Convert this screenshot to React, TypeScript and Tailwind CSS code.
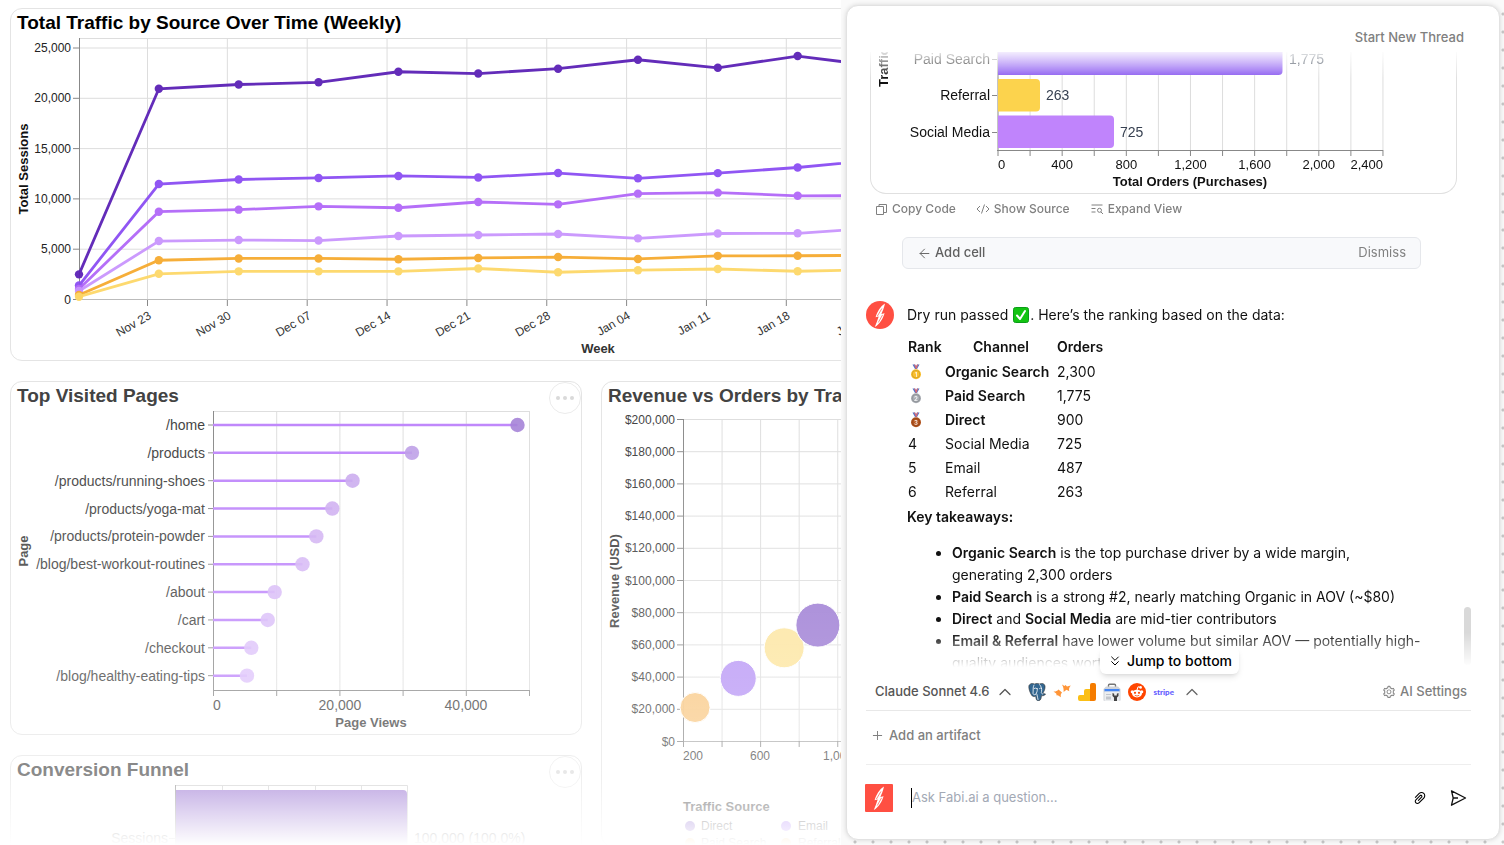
import React from 'react'
import { AiOutlinePaperClip, AiOutlinePlus, AiOutlineSetting } from 'react-icons/ai'
import { ArrowLeft, ChevronsDown, ChevronUp } from 'lucide-react'

const traffic = [
    { name: 'Direct', color: '#5b21b6', values: [2500, 20950, 21370, 21590, 22640, 22460, 22940, 23830, 23030, 24200, 23200] },
    { name: 'Organic Search', color: '#8b4df3', values: [1390, 11480, 11930, 12080, 12280, 12130, 12570, 12050, 12560, 13120, 13870] },
    { name: 'Paid Search', color: '#b268f8', values: [1050, 8730, 8930, 9260, 9120, 9690, 9460, 10520, 10620, 10310, 10320] },
    { name: 'Social Media', color: '#c995fd', values: [850, 5810, 5910, 5860, 6310, 6410, 6510, 6080, 6560, 6580, 7110] },
    { name: 'Email', color: '#f6aa2f', values: [450, 3900, 4080, 4080, 4000, 4130, 4220, 4030, 4340, 4350, 4390] },
    { name: 'Referral', color: '#fdd868', values: [280, 2555, 2800, 2800, 2800, 3080, 2710, 2910, 3030, 2810, 2970] },
]

const weeks = ['Nov 23', 'Nov 30', 'Dec 07', 'Dec 14', 'Dec 21', 'Dec 28', 'Jan 04', 'Jan 11', 'Jan 18', 'Jan 25']

const pages = [
    { path: '/home', views: 48100, color: '#a27ed6' },
    { path: '/products', views: 31400, color: '#ba9ae5' },
    { path: '/products/running-shoes', views: 22000, color: '#c6a5ed' },
    { path: '/products/yoga-mat', views: 18800, color: '#cba9f0' },
    { path: '/products/protein-powder', views: 16270, color: '#cfadf2' },
    { path: '/blog/best-workout-routines', views: 14080, color: '#d1b0f4' },
    { path: '/about', views: 9680, color: '#d5b5f6' },
    { path: '/cart', views: 8580, color: '#d6b7f8' },
    { path: '/checkout', views: 5980, color: '#d9bbfa' },
    { path: '/blog/healthy-eating-tips', views: 5300, color: '#dabdfb' },
]

const bubbles = [
    { orders: 260, revenue: 21100, r: 15, color: '#f9c47a' },
    { orders: 484, revenue: 39200, r: 18, color: '#b28df4' },
    { orders: 722, revenue: 58200, r: 20, color: '#fde396' },
    { orders: 897, revenue: 72300, r: 22, color: '#9470d0' },
]

const ranking = [
    { rank: 1, channel: 'Organic Search', orders: '2,300' },
    { rank: 2, channel: 'Paid Search', orders: '1,775' },
    { rank: 3, channel: 'Direct', orders: '900' },
    { rank: 4, channel: 'Social Media', orders: '725' },
    { rank: 5, channel: 'Email', orders: '487' },
    { rank: 6, channel: 'Referral', orders: '263' },
]

const medals = ['#fbc02d', '#a9adb3', '#b3541e']

const format = (n: number) => n.toLocaleString('en-US')

type CardProps = {
    title: string
    dark?: boolean
    menu?: boolean
    className?: string
    children: React.ReactNode
}

const Card = ({ title, dark, menu, className = '', children }: CardProps) => (
    <section className={`relative overflow-hidden rounded-xl border border-[#e4e4e4] bg-white ${className}`}>
        <h2 className={`px-[6px] pt-1 text-[19px] leading-5 font-bold whitespace-nowrap ${dark ? 'text-black' : 'text-[#404040]'}`}>{title}</h2>
        {menu && (
            <button type="button" aria-label="Cell menu" className="absolute top-0 right-0 flex size-8 items-center justify-center gap-[3px] rounded-full border border-[#ebebeb] bg-white">
                <span className="size-1 rounded-full bg-[#d9d9d9]" />
                <span className="size-1 rounded-full bg-[#d9d9d9]" />
                <span className="size-1 rounded-full bg-[#d9d9d9]" />
            </button>
        )}
        {children}
    </section>
)

const TrafficChart = () => {
    const x = (i: number) => 68 + i * 79.85
    const y = (v: number) => 266.5 - v * 0.01006
    return (
        <svg width="1161" height="327" role="img" aria-label="Weekly sessions by source">
            <path d="M68 5.5H1106" stroke="#ddd" />
            {[0, 5000, 10000, 15000, 20000, 25000].map((v) => (
                <g key={v}>
                    <path d={`M68 ${y(v)}H1106`} stroke={v ? '#ddd' : '#bbb'} />
                    <path d={`M62 ${y(v)}H68`} stroke="#888" />
                    <text x="60" y={y(v)} dy="4" textAnchor="end" fontSize="12" fill="#222">{format(v)}</text>
                </g>
            ))}
            {weeks.map((w, i) => (
                <g key={w}>
                    <path d={`M${x(i) + 68.5} 5V266`} stroke="#ddd" />
                    <path d={`M${x(i) + 68.5} 267V273`} stroke="#888" />
                    <text transform={`translate(${x(i) + 73} 285) rotate(-30)`} textAnchor="end" fontSize="12" fill="#333">{w}</text>
                </g>
            ))}
            <path d="M68.5 5V267" stroke="#888" />
            {traffic.map((s) => (
                <g key={s.name} opacity=".95">
                    <polyline points={s.values.map((v, i) => `${x(i)},${y(v)}`).join(' ')} fill="none" stroke={s.color} strokeWidth="2.8" />
                    {s.values.map((v, i) => <circle key={i} cx={x(i)} cy={y(v)} r="4.2" fill={s.color} />)}
                </g>
            ))}
            <text transform="translate(17 136) rotate(-90)" textAnchor="middle" fontSize="13" fontWeight="bold" fill="#111">Total Sessions</text>
            <text x="587" y="320" textAnchor="middle" fontSize="13" fontWeight="bold" fill="#333">Week</text>
        </svg>
    )
}

const PagesChart = () => {
    const x = (v: number) => 202.5 + v * 0.00632
    return (
        <svg width="570" height="329" role="img" aria-label="Page views by page">
            <path d="M202 5.5H519" stroke="#ddd" />
            {[0, 10000, 20000, 30000, 40000, 50000].map((v) => (
                <g key={v}>
                    <path d={`M${x(v)} 5V284`} stroke={v ? '#ddd' : '#888'} />
                    <path d={`M${x(v)} 284V290`} stroke="#888" />
                </g>
            ))}
            <path d="M202 284.5H519" stroke="#888" />
            {pages.map((p, i) => {
                const y = 19 + i * 27.85
                return (
                    <g key={p.path}>
                        <path d={`M197 ${y}H202`} stroke="#888" />
                        <text x="194" y={y} dy="5" textAnchor="end" fontSize="14" fill="#3c3c3c">{p.path}</text>
                        <path d={`M202 ${y}H${x(p.views)}`} stroke="#bd83fb" strokeWidth="2.5" />
                        <circle cx={x(p.views)} cy={y} r="7.2" fill={p.color} fillOpacity=".9" />
                    </g>
                )
            })}
            <g fontSize="14" fill="#3c3c3c">
                <text x="202" y="304">0</text>
                <text x="329" y="304" textAnchor="middle">20,000</text>
                <text x="455" y="304" textAnchor="middle">40,000</text>
            </g>
            <g fontSize="13" fontWeight="bold" fill="#3c3c3c" textAnchor="middle">
                <text x="360" y="321">Page Views</text>
                <text transform="translate(17 145) rotate(-90)">Page</text>
            </g>
        </svg>
    )
}

const RevenueChart = () => {
    const x = (v: number) => 81.5 + (v - 200) * 0.1928
    const y = (v: number) => 335.5 - v * 0.00161
    const dollars = [0, 20, 40, 60, 80, 100, 120, 140, 160, 180, 200]
    return (
        <svg width="570" height="440" role="img" aria-label="Revenue and orders by traffic source">
            {dollars.map((v) => (
                <g key={v}>
                    <path d={`M81 ${y(v * 1000)}H550`} stroke={v ? '#ddd' : '#aaa'} />
                    <path d={`M75 ${y(v * 1000)}H81`} stroke="#888" />
                    <text x="73" y={y(v * 1000)} dy="4" textAnchor="end" fontSize="12" fill="#3c3c3c">${format(v * 1000)}</text>
                </g>
            ))}
            {[200, 400, 600, 800, 1000, 1200, 1400].map((v) => (
                <g key={v}>
                    <path d={`M${x(v)} 13V335`} stroke={v === 200 ? '#888' : '#ddd'} />
                    <path d={`M${x(v)} 335V341`} stroke="#888" />
                </g>
            ))}
            {bubbles.map((b) => (
                <circle key={b.orders} cx={x(b.orders)} cy={y(b.revenue)} r={b.r} fill={b.color} fillOpacity=".95" stroke="#fff" />
            ))}
            <g fontSize="12" fill="#3c3c3c">
                <text x="81" y="354">200</text>
                <text x="158" y="354" textAnchor="middle">600</text>
                <text x="236" y="354" textAnchor="middle">1,000</text>
            </g>
            <text transform="translate(17 175) rotate(-90)" textAnchor="middle" fontSize="13" fontWeight="bold" fill="#3c3c3c">Revenue (USD)</text>
            <text x="81" y="405" fontSize="13" fontWeight="bold" fill="#3c3c3c">Traffic Source</text>
            <g fontSize="12" fill="#3c3c3c">
                <circle cx="88" cy="420" r="5" fill="#7e57c9" />
                <text x="99" y="424">Direct</text>
                <circle cx="184" cy="420" r="5" fill="#a06bf7" />
                <text x="196" y="424">Email</text>
                <circle cx="88" cy="437" r="5" fill="#f6aa2f" />
                <text x="99" y="441">Paid Search</text>
                <circle cx="184" cy="437" r="5" fill="#f6aa2f" />
                <text x="196" y="441">Referral</text>
            </g>
        </svg>
    )
}

const FunnelChart = () => (
    <svg width="570" height="200" role="img" aria-label="Conversion funnel">
        <path d="M164 5.5H396.500V200M211.500 5V10M257.500 5V10M304.500 5V10M350.500 5V10" fill="none" stroke="#ccc" />
        <path d="M164 10H392a4 4 0 0 1 4 4V200H164z" fill="#936ccf" />
        <path d="M164.500 5V200M158 58.500H164" stroke="#888" />
        <g fontSize="14" fill="#3c3c3c">
            <text x="157" y="63" textAnchor="end">Sessions</text>
            <text x="403" y="63">100,000 (100.0%)</text>
        </g>
    </svg>
)

const OrdersChart = () => {
    const x = (v: number) => 127 + v * 0.1604
    const ticks = Array.from({ length: 13 }, (_, i) => i * 200)
    return (
        <svg width="585" height="141" role="img" aria-label="Total orders by traffic channel">
            <defs>
                <linearGradient id="paid" x2="0" y2="1">
                    <stop stopColor="#a877f8" />
                    <stop offset="1" stopColor="#8b5cf0" />
                </linearGradient>
            </defs>
            {ticks.map((v) => <path key={v} d={`M${x(v)} 0V98`} stroke={v ? '#ddd' : '#888'} />)}
            <path d="M126 98.500H512" stroke="#888" />
            {ticks.map((v) => <path key={v} d={`M${x(v)} 98V104`} stroke="#888" />)}
            <path d="M127 -8H411.500V19a4 4 0 0 1 -4 4H127z" fill="url(#paid)" />
            <path d="M127 27H165a4 4 0 0 1 4 4V55.500a4 4 0 0 1 -4 4H127z" fill="#fcd34d" />
            <path d="M127 63.500H239a4 4 0 0 1 4 4V92a4 4 0 0 1 -4 4H127z" fill="#c084fc" />
            <path d="M121 7.500H126M121 43.500H126M121 80.500H126" stroke="#888" />
            <g fontSize="14" fill="#111" textAnchor="end">
                <text x="119" y="12">Paid Search</text>
                <text x="119" y="48">Referral</text>
                <text x="119" y="85">Social Media</text>
            </g>
            <g fontSize="14" fill="#374151">
                <text x="418" y="12">1,775</text>
                <text x="175" y="48">263</text>
                <text x="249" y="85">725</text>
            </g>
            <g fontSize="13" fill="#111" textAnchor="middle">
                <text x="127" y="117" textAnchor="start">0</text>
                {[400, 800, 1200, 1600, 2000].map((v) => <text key={v} x={x(v)} y="117">{format(v)}</text>)}
                <text x="512" y="117" textAnchor="end">2,400</text>
            </g>
            <text x="319" y="134" textAnchor="middle" fontSize="13" fontWeight="bold" fill="#111">Total Orders (Purchases)</text>
            <text transform="translate(17 35) rotate(-90)" fontSize="13" fontWeight="bold" fill="#111">Traffic Source</text>
        </svg>
    )
}

const FabiMark = ({ round }: { round?: boolean }) => (
    <svg viewBox="0 0 28 28" className="size-7 shrink-0" aria-hidden="true">
        <rect width="28" height="28" rx={round ? 14 : 1} fill="#ff4f42" />
        <path d="M19 2.500C18 7 16.600 10.300 15.400 12.900L18.600 12.300C16.800 18 13.500 23.500 8.800 26C10.300 22.600 11.600 19 12.700 15.600L9.600 16.200C11.400 10.500 14.200 5.500 19 2.500z" fill="#fff" />
        <path d="M15.900 7.500L11.300 15.200M16.600 13.800L12.300 21.500" stroke="#ff4f42" strokeWidth=".7" />
    </svg>
)

const Medal = ({ rank }: { rank: number }) => (
    <svg viewBox="0 0 16 16" className="size-4" role="img" aria-label={`Rank ${rank}`}>
        <path d="M4.500 0.500H7L9 5H7z" fill="#4f74c8" />
        <path d="M6 0.500H7.200L9.200 5H8z" fill="#e5696c" />
        <path d="M11.500 0.500H9L7 5H9z" fill="#4f74c8" />
        <path d="M10.200 0.500H9L7.300 4.500L8.500 5z" fill="#e5696c" />
        <circle cx="8" cy="10.200" r="5" fill={medals[rank - 1]} />
        <circle cx="8" cy="10.200" r="3.800" fill="none" stroke="#000" strokeOpacity=".2" strokeWidth=".7" />
        <text x="8" y="12.500" textAnchor="middle" fontSize="6" fontWeight="bold" fill="#fff" fillOpacity=".8">{rank}</text>
    </svg>
)

const CheckMark = () => (
    <svg viewBox="0 0 16 16" className="mx-px inline size-4 align-[-3px]" role="img" aria-label="passed">
        <rect x=".5" y=".5" width="15" height="15" rx="2" fill="#12c412" stroke="#0a9d18" />
        <path d="M4 8.500L7 12 12 4" fill="none" stroke="#fff" strokeWidth="2" strokeLinecap="round" strokeLinejoin="round" />
    </svg>
)

const Sources = () => (
    <button type="button" aria-label="Data sources" className="flex items-center gap-[7px]">
        <svg viewBox="0 0 18 18" className="size-[18px]">
            <path d="M1 2.500C2.500 0 5 .2 6.500 1C8.500 .2 10 .3 11.500 1C14 -.2 16.500 .5 17 3C17.400 5.500 16 8.500 14.800 10.200C15.600 11 17 10.600 17.500 11C17 12.600 14.600 13 13.500 12.600C13.200 14.500 13.200 17.500 10.600 17.700C8.500 18 7.900 16.500 7.800 13C6.500 14 4.500 13.800 3.500 12C2 9.500 .2 5 1 2.500z" fill="#336791" stroke="#333" strokeWidth=".6" />
            <path d="M6 2C4.500 4.500 5.500 7 5 10.500C5.500 12 7 12 8 11M11.500 1.500C13.500 3.500 14 6 13.500 8.500C13 10 13.500 10.500 14.500 11M8 11C8.600 9.500 9.500 8.500 9.300 5.500M9 11.500C9.500 13.500 9.500 15 10 16.500M6 5.500Q7.500 4.500 9 5.500M11.500 5.500Q12.500 4.500 13.600 5.500" fill="none" stroke="#fff" strokeWidth=".8" strokeLinecap="round" />
        </svg>
        <svg viewBox="0 0 18 18" className="size-[18px]" fill="#ff9538">
            <path d="M0.500 8.500C2 8.800 4 8.300 5.500 6.500L9 9.500C7.500 11 7.600 12.600 8 14.200L4.800 12.200 3.700 12.600 3.200 10.600z" />
            <path d="M9 1.500L11.500 3 12.500 2 14 3.500 17.800 2.500C16.500 4 15.500 6 16.300 8.200L13.500 6.800 10.600 9C10.800 6.500 10.500 4 9 1.500z" />
        </svg>
        <svg viewBox="0 0 18 18" className="size-[18px]">
            <path d="M0 14a2 2 0 0 1 2-2H6V8a2 2 0 0 1 2-2H12V18H2a2 2 0 0 1-2-2z" fill="#fbbf16" />
            <path d="M12 2a2 2 0 0 1 2-2H16a2 2 0 0 1 2 2V16a2 2 0 0 1-2 2H12z" fill="#f57c00" />
        </svg>
        <svg viewBox="0 0 18 18" className="size-[18px]">
            <path d="M5.500 4V2.200a1 1 0 0 1 1-1H11.500a1 1 0 0 1 1 1V4" fill="none" stroke="#757575" strokeWidth="1.400" />
            <path d="M3 3.500H15L17.500 6V17a1 1 0 0 1-1 1H1.500a1 1 0 0 1-1-1V6z" fill="#d0d3d8" />
            <path d="M1.500 6H16.500V8.500H1.500z" fill="#4285f4" />
            <path d="M1.500 8.500H16.500V18H1.500z" fill="#eceef0" />
            <path d="M3 11H8V12H3zM3 13.500H8V16.500H3z" fill="#c2c6cc" />
            <path d="M9.500 10V13L11 14.500V18H14V14.500L15.500 13V10L13.800 10.800V12.500H11.200V10.800z" fill="#424242" />
        </svg>
        <svg viewBox="0 0 18 18" className="size-[18px]">
            <circle cx="9" cy="9" r="9" fill="#ff4500" />
            <ellipse cx="9" cy="10.600" rx="5" ry="3.900" fill="#fff" />
            <circle cx="4.200" cy="8.800" r="1.500" fill="#fff" />
            <circle cx="13.800" cy="8.800" r="1.500" fill="#fff" />
            <path d="M9 7L10 3.800 12.500 4.400" fill="none" stroke="#fff" />
            <circle cx="12.600" cy="4.400" r="1.300" fill="#fff" />
            <circle cx="7" cy="9.800" r="1.100" fill="#ff4500" />
            <circle cx="11" cy="9.800" r="1.100" fill="#ff4500" />
            <path d="M6.800 12.300Q9 13.800 11.200 12.300" fill="none" stroke="#ff4500" strokeWidth=".8" />
        </svg>
        <span className="font-[Lato,sans-serif] text-[8px] leading-4 font-black text-[#635bff]">stripe</span>
        <ChevronUp className="ml-px size-5 text-[#666]" strokeWidth={1.5} />
    </button>
)

const Dashboard = () => (
    <main className="relative min-w-0 flex-1 overflow-hidden bg-white font-['Liberation_Sans',Arial,sans-serif]">
        <div className="ml-[10px] flex w-[1163px] flex-col gap-5 pt-2">
            <Card title="Total Traffic by Source Over Time (Weekly)" dark className="h-[353px]">
                <TrafficChart />
            </Card>
            <div className="grid grid-cols-2 items-start gap-[19px]">
                <div className="flex flex-col gap-5">
                    <Card title="Top Visited Pages" menu className="h-[354px]">
                        <PagesChart />
                    </Card>
                    <Card title="Conversion Funnel" menu>
                        <FunnelChart />
                    </Card>
                </div>
                <Card title="Revenue vs Orders by Traffic Source">
                    <RevenueChart />
                </Card>
            </div>
        </div>
        <div className="pointer-events-none absolute inset-0 bg-[linear-gradient(to_bottom,transparent_45%,rgba(255,255,255,.12)_60%,rgba(255,255,255,.28)_82%,rgba(255,255,255,.4)_92%,rgba(255,255,255,.7)_96%,rgba(255,255,255,.92)_99%,#fff)]" />
    </main>
)

const Thread = () => (
    <div className="relative min-h-0 flex-1 overflow-hidden [mask-image:linear-gradient(to_bottom,rgba(0,0,0,.12),#000_26px,#000_calc(100%-40px),transparent_calc(100%-6px))]">
        <div className="ml-[23px] w-[587px] overflow-hidden rounded-b-2xl border border-t-0 border-[#e0e0e0] font-['Liberation_Sans',Arial,sans-serif]">
            <OrdersChart />
        </div>
        <div className="mt-[5px] ml-[28px] flex gap-5 text-xs leading-5 font-medium text-[#808080]">
            <button type="button" className="flex items-center gap-1">
                <svg viewBox="0 0 13 13" className="size-[13px]" fill="none" stroke="currentColor"><path d="M1.500 3.500H8.500V11.500H1.500zM4 3.500V1.500H11.500V9.500H8.500" /></svg>
                Copy Code
            </button>
            <button type="button" className="flex items-center gap-1">
                <svg viewBox="0 0 14 14" className="size-[14px]" fill="none" stroke="currentColor"><path d="M4 4L1 7 4 10M10 4L13 7 10 10M8.500 2.500L5.500 11.500" /></svg>
                Show Source
            </button>
            <button type="button" className="flex items-center gap-1">
                <svg viewBox="0 0 14 14" className="size-[14px]" fill="none" stroke="currentColor"><path d="M1.500 3H12.500M1.500 6.500H5.500M1.500 10H5.500M11 10L13 12" /><circle cx="9.500" cy="8.300" r="2" /></svg>
                Expand View
            </button>
        </div>
        <div className="mt-[18px] ml-[55px] flex h-8 w-[519px] items-center justify-between rounded-md border border-[#e5e7eb] bg-[#f8f9fb] px-[14px] text-[13px]">
            <button type="button" className="flex items-center gap-[3px] font-medium text-[#606060]"><ArrowLeft className="size-[15px]" strokeWidth={1.5} />Add cell</button>
            <button type="button" className="text-[#808080]">Dismiss</button>
        </div>
        <div className="mt-8 ml-[19px] flex gap-[13px]">
            <FabiMark round />
            <div className="w-[530px] pt-[3px] text-sm leading-[22px] text-[#111]">
                <p>Dry run passed <CheckMark />. Here’s the ranking based on the data:</p>
                <table className="mt-2 leading-6">
                    <thead>
                        <tr>
                            <th className="w-[38px] px-px py-px text-left font-semibold">Rank</th>
                            <th className="w-[112px] py-px font-semibold">Channel</th>
                            <th className="py-px font-semibold">Orders</th>
                        </tr>
                    </thead>
                    <tbody>
                        {ranking.map((r) => (
                            <tr key={r.rank} className="h-6">
                                <td className="px-px">{r.rank <= 3 ? <Medal rank={r.rank} /> : r.rank}</td>
                                <td className={r.rank <= 3 ? 'font-semibold whitespace-nowrap' : ''}>{r.channel}</td>
                                <td>{r.orders}</td>
                            </tr>
                        ))}
                    </tbody>
                </table>
                <p className="mt-[2px] font-semibold">Key takeaways:</p>
                <ul className="mt-[14px] list-disc pl-[45px]">
                    <li><strong className="font-semibold">Organic Search</strong> is the top purchase driver by a wide margin,<br />generating 2,300 orders</li>
                    <li><strong className="font-semibold">Paid Search</strong> is a strong #2, nearly matching Organic in AOV (~$80)</li>
                    <li><strong className="font-semibold">Direct</strong> and <strong className="font-semibold">Social Media</strong> are mid-tier contributors</li>
                    <li><strong className="font-semibold">Email &amp; Referral</strong> have lower volume but similar AOV — potentially high-<br />quality audiences worth</li>
                </ul>
            </div>
        </div>
        <div className="absolute right-7 bottom-2 h-[58px] w-[7px] rounded-full bg-[#d9d9d9]" />
    </div>
)

const Chat = () => (
    <aside className="w-[663px] shrink-0 bg-[#fafafa] bg-[radial-gradient(circle,#c8c8c8_1px,transparent_2px)] bg-[size:18px_18px] bg-[position:5px_5px] pt-[5px] pr-1 pb-[5px] pl-[5px] font-[Inter,sans-serif]">
        <div className="flex h-full flex-col rounded-xl border border-[#e2e2e2] bg-white shadow-[0_0_5px_rgba(0,0,0,.15)]">
            <header className="flex h-[46px] shrink-0 items-center justify-end pt-[18px] pr-[35px]">
                <button type="button" className="text-[13px] font-medium text-[#808080]">Start New Thread</button>
            </header>
            <Thread />
            <div className="relative mr-7 ml-[19px] flex h-[38px] shrink-0 items-center border-b border-[#e8e8e8] pl-[9px] text-[13px] font-medium">
                <button type="button" className="absolute -top-[26px] left-[234px] flex h-[27px] w-[139px] items-center justify-center gap-1 rounded-md bg-white text-sm text-black shadow-md">
                    <ChevronsDown className="size-4" strokeWidth={1.5} />Jump to bottom
                </button>
                <button type="button" className="mr-[13px] flex items-center gap-1.5 text-[#555]">Claude Sonnet 4.6<ChevronUp className="size-5" strokeWidth={1.5} /></button>
                <Sources />
                <button type="button" className="ml-auto flex items-center gap-1 pr-1 text-[#808080]"><AiOutlineSetting className="size-[14px]" />AI Settings</button>
            </div>
            <div className="mr-7 ml-[19px] flex h-[54px] shrink-0 items-center border-b border-[#eee] pb-1 pl-[5px]">
                <button type="button" className="flex items-center gap-[5px] text-[13px] font-medium text-[#808080]"><AiOutlinePlus className="size-[13px]" />Add an artifact</button>
            </div>
            <form className="mr-7 ml-[18px] flex h-[74px] shrink-0 items-center pb-2" onSubmit={(e) => e.preventDefault()}>
                <FabiMark />
                <label htmlFor="question" className="sr-only">Question</label>
                <div className="ml-[18px] h-5 w-px bg-black" />
                <input id="question" type="text" placeholder="Ask Fabi.ai a question..." className="min-w-0 flex-1 text-[13px] text-[#111] outline-none placeholder:text-[#a3a9b5]" />
                <button type="button" aria-label="Attach file" className="mr-[21px]"><AiOutlinePaperClip className="size-4" /></button>
                <button type="submit" aria-label="Send" className="mr-1">
                    <svg viewBox="0 0 18 18" className="size-[18px]" fill="none" stroke="#111" strokeWidth="1.300" strokeLinejoin="round"><path d="M2.500 1.800L16.500 9 2.500 16.200 4.200 9zM4.200 9H9" /></svg>
                </button>
            </form>
        </div>
    </aside>
)

const App = () => {
    return (
        <div className="flex h-screen overflow-hidden">
            <Dashboard />
            <Chat />
        </div>
    )
}

export default App
